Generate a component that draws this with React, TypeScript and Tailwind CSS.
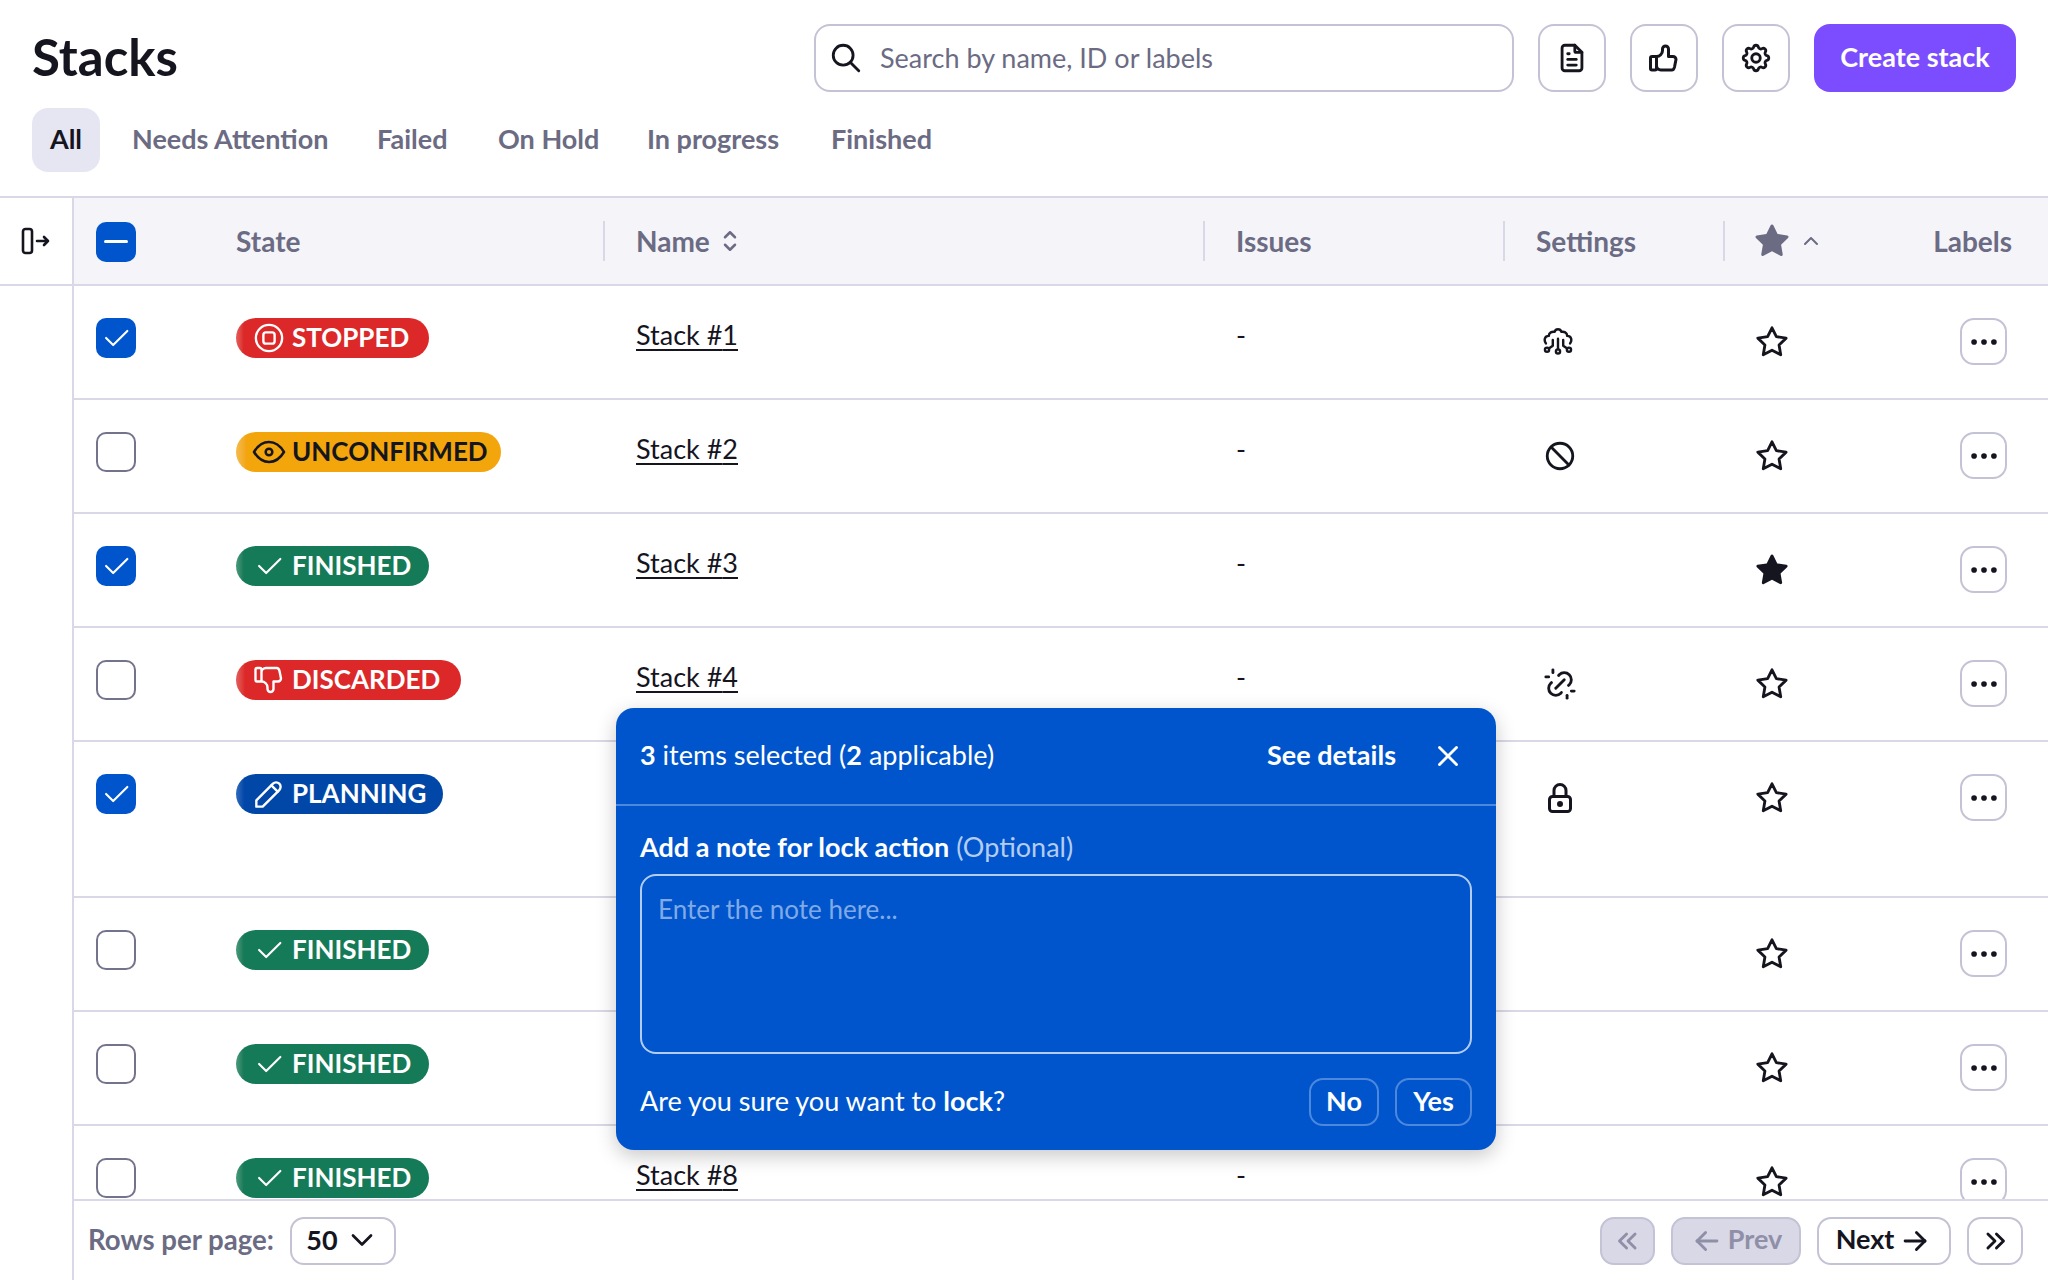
import type { ReactNode } from "react";
import {
  TbArrowLeft,
  TbArrowRight,
  TbBan,
  TbCheck,
  TbChevronDown,
  TbChevronUp,
  TbChevronsLeft,
  TbChevronsRight,
  TbDots,
  TbEye,
  TbFileText,
  TbLock,
  TbPencil,
  TbSearch,
  TbSelector,
  TbSettings,
  TbStar,
  TbStarFilled,
  TbThumbDown,
  TbThumbUp,
  TbUnlink,
  TbX,
} from "react-icons/tb";

const grid = "grid grid-cols-[162px_367px_600px_300px_220px_1fr]";

function StopIcon() {
  return (
    <svg width="30" height="30" viewBox="0 0 24 24" fill="none" stroke="currentColor" strokeWidth="1.9">
      <circle cx="12" cy="12" r="10.5" />
      <rect x="7.5" y="7.5" width="9" height="9" rx="2" />
    </svg>
  );
}

function CloudNodesIcon() {
  return (
    <svg width="30" height="29" viewBox="0 0 26 25" fill="none" stroke="currentColor" strokeWidth="2.1" strokeLinecap="round" strokeLinejoin="round" className="mt-[1px]">
      <path d="M2.5 15 C0.5 12 1.5 8.5 5 8.5 C5 5.5 8 4.5 10 5 C11 2 15 2 16 5 C18 4.5 21 5.5 21 8.5 C24.5 8.5 25.5 12 23.5 15" />
      <path d="M13 20 V11 M5 19.5 L8.5 17 V12 M21 19.5 L17.5 17 V12" />
      <circle cx="3.5" cy="20.5" r="1.8" />
      <circle cx="13" cy="22" r="1.8" />
      <circle cx="22.5" cy="20.5" r="1.8" />
    </svg>
  );
}

function Badge({ kind }: { kind: string }) {
  if (kind === "STOPPED") {
    return (
      <Pill color="from-[#e35d5d] via-[#dc2828] to-[#dc2828] text-white" width="w-[193px]" icon={<StopIcon />}>
        STOPPED
      </Pill>
    );
  }
  if (kind === "UNCONFIRMED") {
    return (
      <Pill color="from-[#f5bb4a] via-[#f3a50c] to-[#f3a50c] text-[#15151f]" width="w-[265px]" icon={<TbEye size={40} strokeWidth={1.5} />}>
        UNCONFIRMED
      </Pill>
    );
  }
  if (kind === "DISCARDED") {
    return (
      <Pill color="from-[#e35d5d] via-[#dc2828] to-[#dc2828] text-white" width="w-[225px]" icon={<TbThumbDown size={36} strokeWidth={1.6} />}>
        DISCARDED
      </Pill>
    );
  }
  if (kind === "PLANNING") {
    return (
      <Pill color="from-[#2f6bbd] via-[#0047a8] to-[#0047a8] text-white" width="w-[207px]" icon={<TbPencil size={38} strokeWidth={1.5} />}>
        PLANNING
      </Pill>
    );
  }
  return (
    <Pill color="from-[#4a9a7e] via-[#157a57] to-[#157a57] text-white" width="w-[193px]" icon={<TbCheck size={34} strokeWidth={1.5} />}>
      FINISHED
    </Pill>
  );
}

function Pill({ color, width, icon, children }: { color: string; width: string; icon: ReactNode; children: ReactNode }) {
  return (
    <span className={`inline-flex h-10 items-center rounded-full bg-linear-to-r via-[4%] pl-[18px] ${width} ${color}`}>
      <span className="flex w-[30px] shrink-0 justify-center [&>svg]:shrink-0">{icon}</span>
      <span className="ml-[8px] pb-[3px] text-[26px] leading-none font-bold whitespace-nowrap">{children}</span>
    </span>
  );
}

function Checkbox({ checked }: { checked: boolean }) {
  if (checked) {
    return (
      <span className="flex h-10 w-10 items-center justify-center rounded-[10px] bg-[#0055cc] text-white">
        <TbCheck size={34} strokeWidth={1.5} />
      </span>
    );
  }
  return <span className="block h-10 w-10 rounded-[10px] border-2 border-[#73738c] bg-white" />;
}

const rows = [
  { id: 1, state: "STOPPED", checked: true, setting: <CloudNodesIcon />, fav: false },
  { id: 2, state: "UNCONFIRMED", checked: false, setting: <TbBan size={34} />, fav: false },
  { id: 3, state: "FINISHED", checked: true, setting: null, fav: true },
  { id: 4, state: "DISCARDED", checked: false, setting: <TbUnlink size={34} />, fav: false },
  { id: 5, state: "PLANNING", checked: true, setting: <TbLock size={36} className="-mt-[1px] -ml-[1px]" />, fav: false, tall: true },
  { id: 6, state: "FINISHED", checked: false, setting: null, fav: false },
  { id: 7, state: "FINISHED", checked: false, setting: null, fav: false },
  { id: 8, state: "FINISHED", checked: false, setting: null, fav: false },
];

function HeaderCell({ children }: { children: ReactNode }) {
  return (
    <div className="flex h-10 items-center border-l-2 border-[#d8d8e6] pl-[31px]">{children}</div>
  );
}

function IconButton({ children }: { children: ReactNode }) {
  return (
    <button className="flex h-[68px] w-[68px] items-center justify-center rounded-2xl border-2 border-[#c4c3d6] bg-white text-[#15151f]">
      {children}
    </button>
  );
}

export default function App() {
  return (
    <div className="relative flex h-screen flex-col overflow-hidden bg-white font-['Lato',sans-serif] text-[#15151f]">
      <div className="flex items-center pt-6 pr-8 pl-8">
        <h1 className="pb-[2px] text-[51px] leading-[66px] font-bold">Stacks</h1>
        <div className="ml-auto flex h-[68px] w-[700px] items-center rounded-2xl border-2 border-[#c4c3d6] pl-[13px]">
          <TbSearch size={34} />
          <span className="ml-[17px] text-[27px] text-[#6b6b83]">Search by name, ID or labels</span>
        </div>
        <div className="ml-6 flex gap-6">
          <IconButton>
            <TbFileText size={34} />
          </IconButton>
          <IconButton>
            <TbThumbUp size={36} />
          </IconButton>
          <IconButton>
            <TbSettings size={34} />
          </IconButton>
        </div>
        <button className="ml-6 h-[68px] w-[202px] rounded-2xl bg-[#7c4dff] pb-[2px] text-[27px] font-bold text-white">
          Create stack
        </button>
      </div>

      <div className="flex gap-4 pt-4 pl-8 text-[27px] font-bold whitespace-nowrap text-[#6b6b83]">
        <span className="flex h-16 w-[68px] items-center justify-center rounded-2xl bg-[#e6e6f2] pb-[2px] text-[#15151f]">All</span>
        <span className="flex h-16 w-[229px] items-center px-4 pb-[2px]">Needs Attention</span>
        <span className="flex h-16 w-[105px] items-center px-4 pb-[2px]">Failed</span>
        <span className="flex h-16 w-[133px] items-center px-4 pb-[2px]">On Hold</span>
        <span className="flex h-16 w-[168px] items-center px-4 pb-[2px]">In progress</span>
        <span className="flex h-16 w-[132px] items-center px-4 pb-[2px]">Finished</span>
      </div>

      <div className="mt-6 flex min-h-0 flex-1 border-t-2 border-[#d8d8e6]">
        <div className="w-[74px] shrink-0 border-r-2 border-[#d8d8e6]">
          <div className="flex h-[88px] items-center justify-center border-b-2 border-[#d8d8e6]">
            <svg width="30" height="28" viewBox="0 0 30 28" fill="none" stroke="#15151f" strokeWidth="2.6" strokeLinecap="round" strokeLinejoin="round">
              <rect x="2" y="2" width="9" height="24" rx="2.5" />
              <path d="M16 14h11M23 10l4 4-4 4" />
            </svg>
          </div>
        </div>

        <div className="flex min-w-0 flex-1 flex-col">
          <div className={`${grid} h-[88px] shrink-0 items-center border-b-2 border-[#d8d8e6] bg-[#f4f4f9] text-[28px] font-bold text-[#6b6b83]`}>
            <div className="mt-[1px] pl-[22px]">
              <span className="flex h-10 w-10 items-center justify-center rounded-[10px] bg-[#0055cc]">
                <span className="h-[3px] w-6 rounded-full bg-white" />
              </span>
            </div>
            <div>State</div>
            <HeaderCell>
              Name
              <TbSelector size={30} className="ml-[5px]" />
            </HeaderCell>
            <HeaderCell>Issues</HeaderCell>
            <HeaderCell>Settings</HeaderCell>
            <div className="flex h-10 items-center border-l-2 border-[#d8d8e6] pl-[29px]">
              <TbStarFilled size={36} />
              <TbChevronUp size={24} className="ml-[9px]" />
              <span className="ml-auto pr-9">Labels</span>
            </div>
          </div>

          <div className="min-h-0 flex-1 overflow-hidden">
            {rows.map((row) => (
              <div
                key={row.id}
                className={`${grid} border-b-2 border-[#d8d8e6] ${row.tall ? "h-[156px]" : "h-[114px]"}`}
              >
                <div className="pt-[32px] pl-[22px]">
                  <Checkbox checked={row.checked} />
                </div>
                <div className="pt-[32px]">
                  <Badge kind={row.state} />
                </div>
                <div className="pt-[31px] pl-[33px] text-[27px] leading-9 underline underline-offset-4">
                  Stack #{row.id}
                </div>
                <div className="pt-[31px] pl-[33px] text-[27px] leading-9">-</div>
                <div className="flex h-[114px] items-start justify-start pt-[39px] pl-[40px]">{row.setting}</div>
                <div className="flex pt-[39px] pl-[32px]">
                  {row.fav ? <TbStarFilled size={34} /> : <TbStar size={34} />}
                  <button className="mt-[-7px] mr-[41px] ml-auto flex h-[47px] w-[47px] items-center justify-center rounded-[14px] border-2 border-[#c4c3d6] bg-white">
                    <TbDots size={34} />
                  </button>
                </div>
              </div>
            ))}
          </div>

          <div className="flex h-[81px] shrink-0 items-center border-t-2 border-[#d8d8e6] pr-[25px] pl-[14px]">
            <span className="pb-[2px] text-[27.6px] font-bold text-[#6b6b83]">Rows per page:</span>
            <button className="ml-4 flex h-[48px] w-[106px] items-center justify-center gap-[6px] rounded-[14px] border-2 border-[#c4c3d6] pb-[1px] text-[27px] font-bold">
              50
              <TbChevronDown size={36} strokeWidth={1.8} />
            </button>
            <div className="ml-auto flex gap-4 text-[27px] font-bold">
              <button className="flex h-[48px] w-[55px] items-center justify-center rounded-[14px] border-2 border-[#c4c3d6] bg-[#d8d8e6] text-[#8f8fa8]">
                <TbChevronsLeft size={34} />
              </button>
              <button className="flex h-[48px] w-[130px] items-center justify-center gap-1 rounded-[14px] border-2 border-[#c4c3d6] bg-[#d8d8e6] pb-[2px] text-[#8f8fa8]">
                <TbArrowLeft size={34} className="mt-[2px]" />
                Prev
              </button>
              <button className="flex h-[48px] w-[134px] items-center justify-center gap-1 rounded-[14px] border-2 border-[#c4c3d6] bg-white pb-[2px]">
                Next
                <TbArrowRight size={34} className="mt-[2px]" />
              </button>
              <button className="flex h-[48px] w-[56px] items-center justify-center rounded-[14px] border-2 border-[#c4c3d6] bg-white">
                <TbChevronsRight size={34} />
              </button>
            </div>
          </div>
        </div>
      </div>

      {/* bulk action popover */}
      <div className="absolute top-[708px] left-[616px] w-[880px] rounded-[18px] bg-[#0055cc] text-white shadow-[0_6px_20px_rgba(0,0,0,0.22)]">
        <div className="flex h-[98px] items-center border-b-2 border-[#4c88dd] pr-6 pl-6 text-[27px]">
          <span className="pb-[2px]">
            <b>3</b> items selected (<b>2</b> applicable)
          </span>
          <span className="ml-auto pb-[2px] font-bold">See details</span>
          <TbX size={34} className="mr-[7px] ml-[35px]" />
        </div>
        <div className="px-6 pt-[23px] pb-6">
          <div className="text-[27px] leading-9">
            <b>Add a note for lock action</b> <span className="text-[#b3ccf0]">(Optional)</span>
          </div>
          <div className="mt-[9px] h-[180px] rounded-2xl border-2 border-[#b3ccf0] px-4 pt-[15px] text-[26px] leading-9 text-[#80aae6]">
            Enter the note here...
          </div>
          <div className="mt-[24px] flex items-center text-[27px]">
            <span className="pb-[2px]">
              Are you sure you want to <b>lock</b>?
            </span>
            <button className="ml-auto h-[48px] w-[70px] rounded-[14px] border-2 border-[#4c88dd] pb-[2px] font-bold">No</button>
            <button className="ml-4 h-[48px] w-[77px] rounded-[14px] border-2 border-[#4c88dd] pb-[2px] font-bold">Yes</button>
          </div>
        </div>
      </div>
    </div>
  );
}
